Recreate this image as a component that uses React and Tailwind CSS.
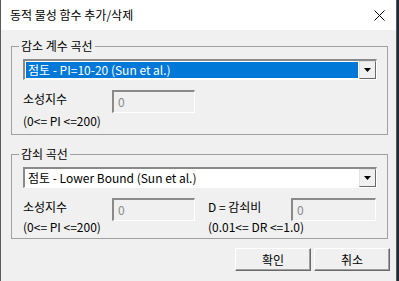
import React from 'react';

const FONT = { fontFamily: '"Noto Sans CJK KR", "Noto Sans", sans-serif' };

const Caret = () => (
  <svg width="7" height="4" viewBox="0 0 7 4">
    <path d="M0 0h7L3.5 4z" fill="#000" />
  </svg>
);

const Combo = ({ text, selected }) => (
  <div className="flex h-[21px] w-[354px] border-t-2 border-l-2 border-t-[#8a8a8a] border-l-[#8a8a8a] border-b border-r border-b-white border-r-white bg-white">
    <div className="flex flex-1 items-center p-[1px]">
      <div className={`flex h-full flex-1 items-center pl-[2px] ${selected ? 'bg-[#0078d7] text-white' : 'text-black'}`}>
        {text}
      </div>
    </div>
    <div className="flex w-[17px] items-center justify-center border border-t-[#e3e3e3] border-l-[#e3e3e3] border-b-[#696969] border-r-[#696969] bg-[#f0f0f0]">
      <Caret />
    </div>
  </div>
);

const Field = ({ w }) => (
  <div className={`flex h-[23px] ${w} items-center border-t-2 border-l-2 border-t-[#8a8a8a] border-l-[#8a8a8a] border-b border-r border-b-white border-r-white bg-[#f0f0f0] pl-[4px] text-[#8a8a8a]`}>
    0
  </div>
);

const Group = ({ title, className, children }) => (
  <div className={`relative mx-[10px] w-[377px] border border-[#a0a0a0] px-[11px] ${className}`}>
    <span className="absolute -top-[9px] left-[7px] bg-[#f0f0f0] px-[2px] leading-[16px]">{title}</span>
    {children}
  </div>
);

export default function App() {
  return (
    <div className="flex h-[281px] w-[399px] bg-[#1d2a38] text-[12px] text-black" style={FONT}>
      <div className="flex w-[397px] flex-col border-x border-[#5a5a5a] bg-[#f0f0f0]">
        {/* title bar */}
        <div className="flex h-[30px] items-center justify-between bg-white pl-[9px] pr-[8px]">
          <span className="text-[12px]">동적 물성 함수 추가/삭제</span>
          <svg width="11" height="11" viewBox="0 0 11 11" className="mr-[3px]">
            <path d="M0.5 0.5l10 10M10.5 0.5l-10 10" stroke="#000" strokeWidth="1" />
          </svg>
        </div>

        {/* damping coefficient curve */}
        <Group title="감소 계수 곡선" className="mt-[16px] h-[89px] pt-[12px]">
          <Combo text="점토 - PI=10-20 (Sun et al.)" selected />
          <div className="mt-[10px] flex items-start">
            <span className="w-[89px] leading-[18px]">소성지수</span>
            <Field w="w-[83px]" />
          </div>
          <div className="mt-[1px] leading-[14px]">(0&lt;= PI &lt;=200)</div>
        </Group>

        {/* damping curve */}
        <Group title="감쇠 곡선" className="mt-[19px] h-[85px] pt-[12px]">
          <Combo text="점토 - Lower Bound (Sun et al.)" />
          <div className="mt-[10px] flex items-start">
            <div className="flex w-[185px] flex-col">
              <div className="flex items-start">
                <span className="w-[89px] leading-[18px]">소성지수</span>
                <Field w="w-[83px]" />
              </div>
              <div className="-mt-[1px] leading-[14px]">(0&lt;= PI &lt;=200)</div>
            </div>
            <div className="flex w-[168px] flex-col">
              <div className="flex items-start">
                <span className="w-[83px] leading-[18px]">D = 감쇠비</span>
                <Field w="w-[85px]" />
              </div>
              <div className="-mt-[1px] leading-[14px]">(0.01&lt;= DR &lt;=1.0)</div>
            </div>
          </div>
        </Group>

        {/* buttons */}
        <div className="mt-[9px] flex justify-end gap-[3px] pr-[6px]">
          <button className="h-[23px] w-[76px] border border-t-white border-l-white border-b-[#696969] border-r-[#696969] bg-[#f0f0f0] shadow-[inset_-1px_-1px_0_#a0a0a0]">
            확인
          </button>
          <button className="h-[23px] w-[76px] border border-t-white border-l-white border-b-[#696969] border-r-[#696969] bg-[#f0f0f0] shadow-[inset_-1px_-1px_0_#a0a0a0]">
            취소
          </button>
        </div>
      </div>
    </div>
  );
}
